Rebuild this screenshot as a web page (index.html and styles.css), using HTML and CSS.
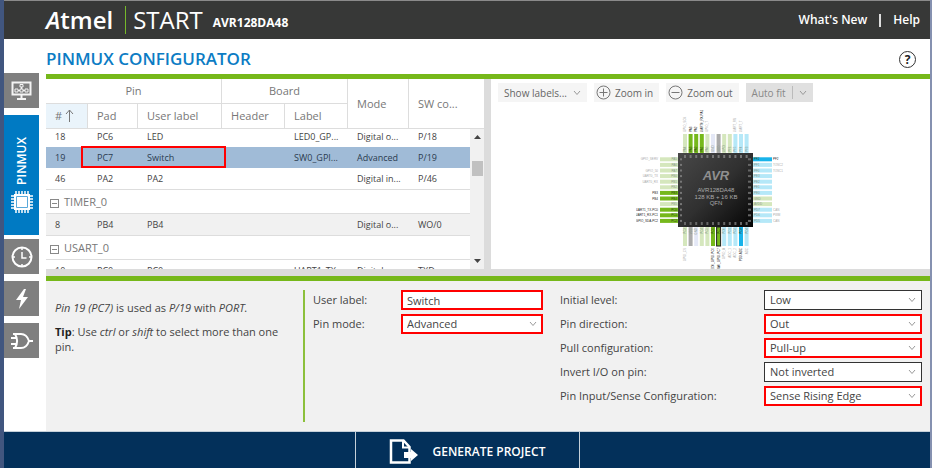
FILE: index.html
```html
<!DOCTYPE html>
<html lang="en">
<head>
<meta charset="utf-8">
<title>Atmel START - Pinmux Configurator</title>
<link rel="stylesheet" href="styles.css">
</head>
<body>
<div class="app">
  <header class="topbar">
    <span class="brand"><i>A</i>tmel</span>
    <span class="product">START</span>
    <span class="device">AVR128DA48</span>
    <nav class="toplinks">
      <a href="#new">What's New</a>
      <span class="divider"></span>
      <a href="#help">Help</a>
    </nav>
  </header>

  <div class="workspace">
    <nav class="sidebar">
      <button class="side-item" aria-label="Dashboard">
        <svg width="22" height="20" viewBox="0 0 22 20" fill="none" stroke="#f4f4f4">
          <path d="M1.500 1.500h18v12h-18z" stroke-width="2"/>
          <path d="M10.500 14v3M6 18h9" stroke-width="2"/>
          <path d="M9 3.500h3v2.500h-3zM4 8h3v3h-3zM9 8h3v3h-3zM14 8h3v3h-3zM10.500 6v2M7 9.500h2M12 9.500h2"/>
        </svg>
      </button>
      <button class="side-item active">
        <span class="side-label">PINMUX</span>
        <svg width="22" height="22" viewBox="0 0 22 22" fill="none" stroke="#fff">
          <path d="M5 0v22M8 0v22M11 0v22M14 0v22M17 0v22M0 5h22M0 8h22M0 11h22M0 14h22M0 17h22" stroke-width="1.500"/>
          <path d="M3 3h16v16H3z" fill="#fff" stroke="none"/>
          <path d="M5.500 5.500h11v11h-11z" fill="#fff" stroke="#5aa9da"/>
        </svg>
      </button>
      <button class="side-item" aria-label="Clocks">
        <svg width="24" height="24" viewBox="0 0 24 24" fill="none" stroke="#fff" stroke-width="2">
          <circle cx="12" cy="12" r="9.500"/>
          <path d="M12 7v6h4.500M12 2v3M12 19v3M2 12h3M19 12h3" stroke-width="1.500"/>
        </svg>
      </button>
      <button class="side-item" aria-label="Events">
        <svg width="22" height="22" viewBox="0 0 22 22" fill="#fff"><path d="M13 1L5 12h5L8 21l9-12h-5l3-8z"/></svg>
      </button>
      <button class="side-item" aria-label="Logic">
        <svg width="24" height="20" viewBox="0 0 24 20" fill="none" stroke="#fff" stroke-width="2">
          <path d="M3 3h8c5 0 7 4 8 7c-1 3-3 7-8 7H3M5 3c3 5 3 9 0 14M1 7h5M1 13h5M19 10h4"/>
        </svg>
      </button>
    </nav>

    <main class="content">
      <div class="titlebar">
        <h1>PINMUX CONFIGURATOR</h1>
        <button class="help" aria-label="Page help">?</button>
      </div>

      <div class="panes">
        <section class="pin-pane">
          <table class="pins head">
            <colgroup><col class="c-num"><col class="c-pad"><col class="c-user"><col class="c-header"><col class="c-label"><col class="c-mode"><col></colgroup>
            <thead>
              <tr><th colspan="3" class="group">Pin</th><th colspan="2" class="group">Board</th><th rowspan="2">Mode</th><th rowspan="2">SW co...</th></tr>
              <tr><th class="sorted"># <svg width="9" height="13" viewBox="0 0 9 13" fill="none" stroke="#777"><path d="M4.500 13V1M1 5l3.500-4L8 5"/></svg></th><th>Pad</th><th>User label</th><th>Header</th><th>Label</th></tr>
            </thead>
          </table>
          <div class="table-body">
            <div class="rows">
              <table class="pins">
                <colgroup><col class="c-num"><col class="c-pad"><col class="c-user"><col class="c-header"><col class="c-label"><col class="c-mode"><col></colgroup>
                <tbody>
                  <tr><td>18</td><td>PC6</td><td>LED</td><td></td><td>LED0_GP...</td><td>Digital o...</td><td>P/18</td></tr>
                  <tr class="selected"><td>19</td><td class="marked">PC7<span class="marker"></span></td><td>Switch</td><td></td><td>SW0_GPI...</td><td>Advanced</td><td>P/19</td></tr>
                  <tr><td>46</td><td>PA2</td><td>PA2</td><td></td><td></td><td>Digital in...</td><td>P/46</td></tr>
                  <tr class="section"><td colspan="7"><button class="toggle" aria-label="Collapse TIMER_0"></button>TIMER_0</td></tr>
                  <tr class="shade"><td>8</td><td>PB4</td><td>PB4</td><td></td><td></td><td>Digital o...</td><td>WO/0</td></tr>
                  <tr class="section"><td colspan="7"><button class="toggle" aria-label="Collapse USART_0"></button>USART_0</td></tr>
                  <tr><td>10</td><td>PC0</td><td>PC0</td><td></td><td>UART1_TX</td><td>Digital o...</td><td>TXD</td></tr>
                </tbody>
              </table>
            </div>
            <div class="scrollbar">
              <svg width="9" height="5" viewBox="0 0 9 5"><path d="M1 5l3.500-4L8 5z" fill="#444"/></svg>
              <span class="thumb"></span>
              <svg width="9" height="5" viewBox="0 0 9 5"><path d="M1 0l3.500 4L8 0z" fill="#444"/></svg>
            </div>
          </div>
        </section>

        <section class="chip-pane">
          <div class="toolbar">
            <button class="tool wide">Show labels...<svg width="8" height="6" viewBox="0 0 8 6" fill="none" stroke="#999"><path d="M1 1l3 3.500L7 1"/></svg></button>
            <button class="tool"><svg width="15" height="15" viewBox="0 0 15 15" fill="none" stroke="#777"><circle cx="7.500" cy="7.500" r="6.500"/><path d="M3.500 7.500h8M7.500 3.500v8"/></svg>Zoom in</button>
            <button class="tool"><svg width="15" height="15" viewBox="0 0 15 15" fill="none" stroke="#777"><circle cx="7.500" cy="7.500" r="6.500"/><path d="M3.500 7.500h8"/></svg>Zoom out</button>
            <button class="tool pressed">Auto fit<span class="split"></span><svg width="8" height="6" viewBox="0 0 8 6" fill="none" stroke="#999"><path d="M1 1l3 3.500L7 1"/></svg></button>
          </div>
          <svg id="chip" class="chip" width="149" height="162" viewBox="636 107 149 162">
            <defs><linearGradient id="die" x1="0" y1="0" x2="1" y2="1"><stop offset="0" stop-color="#484848"/><stop offset=".5" stop-color="#303030"/><stop offset="1" stop-color="#050505"/></linearGradient></defs>
            <g id="pins"></g>
            <rect x="678" y="153" width="75" height="74" fill="url(#die)"/>
            <g id="numbers"></g>
            <text x="716" y="180" class="chip-logo">AVR</text>
            <text x="716" y="192" class="chip-text">AVR128DA48</text>
            <text x="716" y="199" class="chip-text">128 KB + 16 KB</text>
            <text x="716" y="205" class="chip-text">QFN</text>
          </svg>
        </section>
      </div>

      <section class="details">
        <div class="info">
          <p><i>Pin 19 (PC7)</i> is used as <i>P/19</i> with <i>PORT.</i></p>
          <p><b>Tip</b>: Use <i>ctrl</i> or <i>shift</i> to select more than one pin.</p>
        </div>
        <form class="fields">
          <label for="user">User label:</label><input id="user" class="box alert" value="Switch">
          <label for="mode">Pin mode:</label><select id="mode" class="box alert"><option>Advanced</option></select>
        </form>
        <form class="fields options">
          <label for="level">Initial level:</label><select id="level" class="box"><option>Low</option></select>
          <label for="dir">Pin direction:</label><select id="dir" class="box alert"><option>Out</option></select>
          <label for="pull">Pull configuration:</label><select id="pull" class="box alert"><option>Pull-up</option></select>
          <label for="invert">Invert I/O on pin:</label><select id="invert" class="box"><option>Not inverted</option></select>
          <label for="sense">Pin Input/Sense Configuration:</label><select id="sense" class="box alert"><option>Sense Rising Edge</option></select>
        </form>
      </section>
    </main>
  </div>

  <footer class="footer">
    <button class="generate">
      <svg width="29" height="25" viewBox="0 0 29 25">
        <path d="M2 1.500h12.500l6 6.500v15.500H2z" fill="none" stroke="#fff" stroke-width="2.500"/>
        <path d="M14 2v6.500h6" fill="none" stroke="#fff" stroke-width="2"/>
        <path d="M15 13h7v-3l7 6-7 6v-3h-7z" fill="#fff"/>
      </svg>
      GENERATE PROJECT
    </button>
  </footer>
</div>
<script src="chip.js"></script>
</body>
</html>
```

FILE: styles.css
```css
* { box-sizing: border-box; }

body {
  margin: 0;
  background: #fff;
  color: #444;
  font: 11px/16px "Open Sans", "Noto Sans", sans-serif;
}

button, input, select { font: inherit; color: inherit; }
button { border: 0; padding: 0; background: none; }

.app {
  display: flex;
  flex-direction: column;
  min-height: 100vh;
  margin-right: 3px;
  border-left: 4px solid #41567f;
  border-right: 2px solid #8591b0;
}

/* Top bar */
.topbar {
  display: flex;
  align-items: center;
  height: 39px;
  padding: 0 10px 0 42px;
  background: #373837;
  border-top: 1px solid #8a8a8a;
  color: #fff;
}
.brand { font-size: 24px; font-weight: 600; line-height: 28px; }
.product {
  margin-left: 12px;
  padding-left: 7px;
  border-left: 1px solid #76b82a;
  font-size: 24px;
  line-height: 28px;
}
.device { margin: 5px 0 0 10px; font-size: 12px; font-weight: 700; }
.toplinks { display: flex; align-items: center; gap: 12px; margin-left: auto; }
.toplinks a { color: #fff; font-size: 12px; font-weight: 600; text-decoration: none; }
.divider { width: 2px; height: 13px; background: #ddd; }

/* Sidebar */
.workspace { display: flex; flex: 1; }
.sidebar { flex: none; display: flex; flex-direction: column; gap: 7px; width: 35px; padding-top: 34px; }
.side-item {
  display: flex;
  flex-direction: column;
  align-items: center;
  justify-content: center;
  height: 35px;
  background: #7f7f7f;
}
.side-item.active { height: 120px; gap: 7px; margin-bottom: -3px; background: #007ac3; color: #fff; }
.side-label { writing-mode: vertical-rl; transform: rotate(180deg); font-size: 12px; font-weight: 600; }

.content { flex: 1; display: flex; flex-direction: column; min-width: 0; margin-left: 7px; }
.titlebar {
  display: flex;
  align-items: center;
  justify-content: space-between;
  height: 40px;
  padding: 0 14px 0 0;
  border-bottom: 5px solid #76b81a;
}
h1 { margin: 4px 0 0; color: #0c7cc4; font-size: 17px; font-weight: 600; line-height: 24px; }
.help {
  width: 17px;
  height: 17px;
  margin-top: 6px;
  border: 1px solid #333;
  border-radius: 50%;
  color: #222;
  font-size: 12px;
  font-weight: 700;
  line-height: 15px;
}

/* Pin table */
.panes {
  display: grid;
  grid-template-columns: 438fr 439fr;
  gap: 7px;
  height: 197px;
  padding-bottom: 7px;
  background: #dcdcdc;
}
.pin-pane { display: flex; flex-direction: column; min-height: 0; background: #fff; }
.pins { width: 100%; table-layout: fixed; border-collapse: separate; border-spacing: 0; }
.c-num { width: 42px; }
.c-pad { width: 50px; }
.c-user { width: 84px; }
.c-header, .c-label { width: 63px; }
.c-mode { width: 61px; }
.pins th {
  height: 25px;
  padding: 0 0 0 9px;
  border-right: 1px solid #ddd;
  border-bottom: 1px solid #ddd;
  color: #777;
  font-weight: 400;
  text-align: left;
  white-space: nowrap;
}
.pins th.group { padding: 0; text-align: center; }
.pins tr:first-child th:last-child { border-right: 0; }
.pins th.sorted { background: #eaf4fb; }
.pins th svg { vertical-align: -2px; }
.table-body { flex: 1; display: flex; min-height: 0; }
.rows { flex: 1; overflow: hidden; }
.rows .pins { margin-top: -3px; font-size: 9px; }
.rows td { height: 21px; padding: 0 0 0 9px; white-space: nowrap; }
.rows .selected td { background: #a0bbd7; color: #2b3c50; }
.rows .shade td { background: #f1f1f1; }
.rows .section td {
  height: 25px;
  padding-left: 4px;
  border-top: 1px solid #ddd;
  border-bottom: 1px solid #ddd;
  color: #777;
  font-size: 11px;
}
.toggle {
  width: 9px;
  height: 9px;
  margin-right: 5px;
  border: 1px solid #888;
  background: linear-gradient(#888, #888) center / 5px 1px no-repeat;
  vertical-align: -1px;
}
.marked { position: relative; }
.marker {
  position: absolute;
  top: -1px;
  left: -7px;
  z-index: 1;
  width: 145px;
  height: 22px;
  border: 2px solid #f00;
}
.scrollbar {
  display: flex;
  flex-direction: column;
  align-items: center;
  width: 14px;
  padding: 5px 0;
  background: #f1f1f1;
}
.thumb { width: 11px; height: 15px; margin: 22px 0 auto; background: #c1c1c1; }

/* Chip view */
.chip-pane { display: flex; flex-direction: column; align-items: center; gap: 5px; padding-top: 4px; background: #fff; }
.toolbar { display: flex; align-self: stretch; gap: 7px; padding-left: 7px; }
.tool {
  display: flex;
  align-items: center;
  gap: 4px;
  height: 19px;
  padding: 0 6px 0 2px;
  background: #f5f5f5;
  color: #666;
  font-size: 10px;
}
.tool.wide, .tool.pressed { gap: 6px; padding: 0 6px; }
.tool.pressed { background: #e0e0e0; color: #888; }
.split { width: 1px; height: 13px; background: #bbb; }
.chip { flex: none; }
.chip text { font-family: "Liberation Sans", sans-serif; }
.chip .chip-logo { font-size: 13px; font-style: italic; font-weight: 700; fill: #8f8f8f; text-anchor: middle; }
.chip .chip-text { font-size: 6px; fill: #aaa; text-anchor: middle; }
.chip .pin-label { font-size: 3px; }

/* Details */
.details {
  flex: 1;
  display: grid;
  grid-template-columns: 259fr 238fr 387fr;
  padding: 9px 0;
  background: #f1f1f1;
  border-top: 5px solid #76b81a;
}
.info { padding: 10px 18px 0 9px; border-right: 2px solid #8cc03c; line-height: 15px; }
.info p { margin: 0 0 9px; }
.info b { color: #222; }
.fields { display: grid; grid-template-columns: 1fr 142px; grid-auto-rows: 20px; row-gap: 4px; align-content: start; padding: 0 0 0 8px; align-items: center; }
.options { grid-template-columns: 1fr 158px; padding: 0 8px 0 17px; }
.box {
  width: 100%;
  height: 20px;
  padding: 0 5px;
  border: 1px solid #333;
  border-radius: 0;
  background: #fff;
  outline: 0;
  appearance: none;
}
.box.alert { padding: 0 4px; border: 2px solid #f00; }
select.box {
  background: #fff url("data:image/svg+xml,%3Csvg xmlns='http://www.w3.org/2000/svg' width='8' height='6' fill='none' stroke='%23999'%3E%3Cpath d='M1 1l3 3.500L7 1'/%3E%3C/svg%3E") right 5px center no-repeat;
}
select.box.alert { background-position: right 4px center; }

/* Footer */
.footer {
  display: flex;
  justify-content: center;
  height: 37px;
  background: #03305a;
  border-top: 1px solid #c5d0d9;
}
.generate {
  display: flex;
  align-items: center;
  justify-content: center;
  gap: 15px;
  width: 225px;
  padding-top: 3px;
  border: solid #c5d0d9;
  border-width: 0 1px;
  color: #fff;
  font-size: 12px;
  font-weight: 600;
}
```

FILE: chip.js
```js
const colors = {
  g: '#76b81c', l: '#d5e7bd', b: '#b5e8f8', B: '#18b3ea', p: '#e4e8f6', x: '#ababab'
};

// Each side: pin kinds, pin names and outer function labels in drawing order.
const sides = {
  left: ['llllllgglggg',
    'PA5 PA6 PA7 PB0 PB1 PB2 PB3 PB4 PB5 PC0 PC1 PC2',
    'GPIO_SERV,,GPIO_50,UART0_TX,UART0_RX,,PB3,PB4,,UART1_TX-PC0,UART1_RX-PC1,GPIO_SDA-PC2'],
  right: ['Bbbbbbbllbbb',
    'PF2 PF1 PF0 PE3 PE2 PE1 PE0 GND AVDD PD7 PD6 PD5',
    'PF2,TOSC2,TOSC1,,,,,,,CAN,PWM,CAN'],
  top: ['lggglpxllbbb',
    'PA4 PA3 PA2 PA1 PA0 GND VDD UPDI PF6 PF5 PF4 PF3',
    'GPIO_SCK,PA3,PA2,UART0_RX-PA1,GPIO_T,,,,,UART_RX,UART_T,'],
  bottom: ['lxpllggbbbBb',
    'PC3 VDD GND PC4 PC5 PC6 PC7 PD0 PD1 PD2 PD3 PD4',
    'GPIO_CS,,,,,LED0_GPIO-PC6,SW0_GPIO-PC7,GPIO_A,ADC_1,ADC_2,PD3-ADC,ADC']
};

const pins = document.getElementById('pins');
const numbers = document.getElementById('numbers');

function add(parent, tag, attrs, text) {
  const node = document.createElementNS('http://www.w3.org/2000/svg', tag);
  for (const key in attrs) node.setAttribute(key, attrs[key]);
  if (text) node.textContent = text;
  parent.appendChild(node);
}

function label(parent, x, y, text, anchor, vertical, fill) {
  if (!text) return;
  const attrs = { x, y, class: 'pin-label', fill, 'text-anchor': anchor };
  if (vertical) attrs.transform = `rotate(-90 ${x} ${y})`;
  add(parent, 'text', attrs, text);
}

for (const side in sides) {
  const [kinds, names, labels] = sides[side];
  const vertical = side === 'top' || side === 'bottom';
  names.split(' ').forEach((name, i) => {
    const kind = kinds[i];
    const pos = (vertical ? 685 : 159.3) + i * 5.6;
    const near = { left: 660, right: 753, top: 134, bottom: 227 }[side];
    const ink = kind === 'g' || kind === 'B' ? '#2c4a10' : '#8a9a8a';
    const outer = kind === 'g' || kind === 'B' ? '#222' : '#aaa';
    const text = labels.split(',')[i];
    const rect = vertical
      ? { x: pos - 2, y: near, width: 4, height: 19 }
      : { x: near, y: pos - 2, width: 19, height: 4 };
    rect.fill = colors[kind];
    if (name === 'PC7') { rect.stroke = '#222'; rect['stroke-width'] = 1; }
    add(pins, 'rect', rect);
    if (side === 'left') {
      label(pins, 677, pos + 1, name, 'end', false, ink);
      label(pins, 658, pos + 1, text, 'end', false, outer);
      add(numbers, 'rect', { x: 680, y: pos - 1, width: 2, height: 2, fill: '#777' });
    } else if (side === 'right') {
      label(pins, 754, pos + 1, name, 'start', false, ink);
      label(pins, 773, pos + 1, text, 'start', false, outer);
      add(numbers, 'rect', { x: 748, y: pos - 1, width: 3, height: 2, fill: '#666' });
    } else if (side === 'top') {
      label(pins, pos + 1, 152, name, 'start', true, ink);
      label(pins, pos + 1, 132, text, 'start', true, outer);
      add(numbers, 'rect', { x: pos - 1, y: 155, width: 2, height: 3, fill: '#777' });
    } else {
      label(pins, pos + 1, 228, name, 'end', true, ink);
      label(pins, pos + 1, 248, text, 'end', true, outer);
      add(numbers, 'rect', { x: pos - 1, y: 222, width: 2, height: 3, fill: '#666' });
    }
  });
}
```
